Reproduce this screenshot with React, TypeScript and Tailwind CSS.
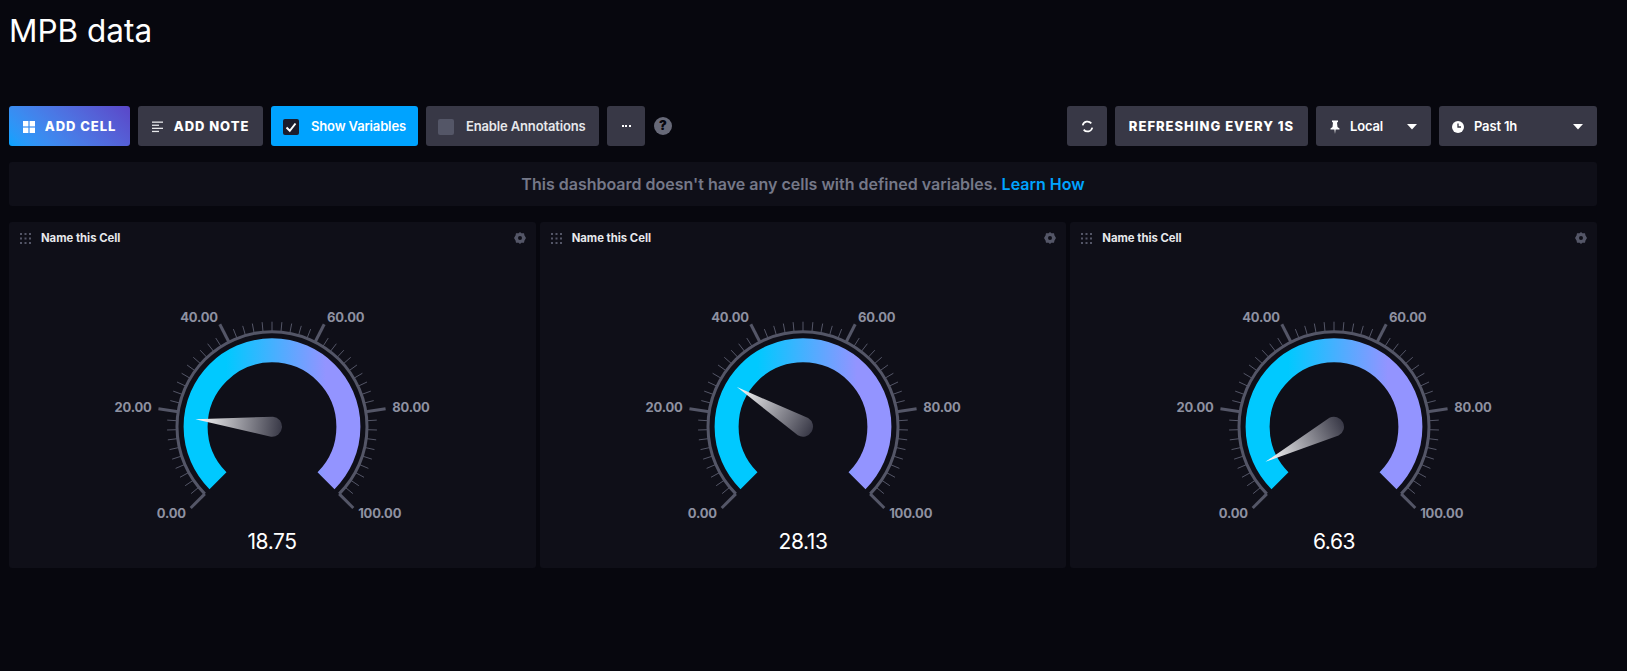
const font = "font-['Inter','Liberation_Sans',sans-serif]";

function polar(cx: number, cy: number, r: number, deg: number) {
  // 0 degrees points straight up, clockwise is positive
  const a = (deg * Math.PI) / 180;
  return { x: cx + r * Math.sin(a), y: cy - r * Math.cos(a) };
}

function arcPath(r: number, start: number, end: number) {
  const a = polar(0, 0, r, start);
  const b = polar(0, 0, r, end);
  return `M ${a.x} ${a.y} A ${r} ${r} 0 1 1 ${b.x} ${b.y}`;
}

const labels = [
  { text: "0.00", x: -100.7, y: 87.2 },
  { text: "20.00", x: -139, y: -19.5 },
  { text: "40.00", x: -73, y: -109.5 },
  { text: "60.00", x: 73.7, y: -109.5 },
  { text: "80.00", x: 139, y: -19.5 },
  { text: "100.00", x: 107.7, y: 87.2 },
];

function Gauge({ id, value }: { id: string; value: number }) {
  const ticks = Array.from({ length: 51 }, (_, i) => i);
  const needleAngle = -135 + (value / 100) * 270;

  return (
    <svg viewBox="-200 -172.7 400 310" className="h-[310px] w-[400px]">
      <defs>
        <linearGradient id={`arc-${id}`} gradientUnits="userSpaceOnUse" x1="-46" y1="0" x2="54" y2="0">
          <stop offset="0" stopColor="#00c9ff" />
          <stop offset="1" stopColor="#9394ff" />
        </linearGradient>
        <linearGradient id={`needle-${id}`} gradientUnits="userSpaceOnUse" x1="0" y1="-77" x2="0" y2="10">
          <stop offset="0" stopColor="#ffffff" />
          <stop offset="1" stopColor="#383846" />
        </linearGradient>
      </defs>
      {ticks.map((i) => {
        const deg = -135 + i * 5.4;
        const major = i % 10 === 0;
        const a = polar(0, 0, 95, deg);
        const b = polar(0, 0, major ? 115 : 105, deg);
        return (
          <line
            key={i}
            x1={a.x}
            y1={a.y}
            x2={b.x}
            y2={b.y}
            stroke="#545667"
            strokeWidth={major ? 3 : 1}
          />
        );
      })}
      <path d={arcPath(95, -135, 135)} fill="none" stroke="#545667" strokeWidth="3" />
      <path d={arcPath(76.4, -135, 135)} fill="none" stroke={`url(#arc-${id})`} strokeWidth="24" />
      <path
        d="M -10 0 L 0 -77 L 10 0 A 10 10 0 0 1 -10 0 Z"
        fill={`url(#needle-${id})`}
        transform={`rotate(${needleAngle})`}
      />
      {labels.map((l) => (
        <text
          key={l.text}
          x={l.x}
          y={l.y}
          dy="0.35em"
          textAnchor="middle"
          fill="#8e91a1"
          className="text-[13px] font-bold tracking-[-0.2px]"
        >
          {l.text}
        </text>
      ))}
      <text
        x="0"
        y="115"
        dy="0.35em"
        textAnchor="middle"
        fill="#ffffff"
        className="text-[21px] tracking-[-0.4px]"
      >
        {value.toFixed(2)}
      </text>
    </svg>
  );
}

function Grip() {
  const pts = [0, 4.5, 9];
  return (
    <svg width="11" height="11" viewBox="0 0 11 11">
      {pts.map((y) => pts.map((x) => <rect key={`${x}-${y}`} x={x} y={y} width="2" height="2" fill="#545667" />))}
    </svg>
  );
}

function Gear() {
  return (
    <svg width="12" height="12" viewBox="0 0 12 12">
      <path
        fillRule="evenodd"
        fill="#545667"
        d="M6 0 L7.4 1.2 L10 1.3 L10.5 3.4 L12 6 L10.5 8.6 L10 10.7 L7.4 10.8 L6 12 L4.6 10.8 L2 10.7 L1.5 8.6 L0 6 L1.5 3.4 L2 1.3 L4.6 1.2 Z M6 4 A2 2 0 1 0 6 8 A2 2 0 1 0 6 4 Z"
      />
    </svg>
  );
}

function Caret() {
  return (
    <svg width="10" height="6" viewBox="0 0 10 6">
      <path d="M0 0 H10 L5 5.5 Z" fill="#ffffff" />
    </svg>
  );
}

function Cell({ id, value }: { id: string; value: number }) {
  return (
    <div className="flex h-[346px] flex-col overflow-hidden rounded-[3px] bg-[#0f0f18]">
      <div className="flex h-[32px] shrink-0 items-center pr-[10px] pl-[11px]">
        <Grip />
        <span className="ml-[10px] text-[11.3px] leading-[15px] font-bold text-[#e7e8eb]">Name this Cell</span>
        <span className="ml-auto">
          <Gear />
        </span>
      </div>
      <div className="flex justify-center">
        <Gauge id={id} value={value} />
      </div>
    </div>
  );
}

export default function App() {
  return (
    <div className={`${font} min-h-[671px] bg-[#07070e] pr-[30px] pl-[9px] text-white`}>
      <h1 className="flex h-[106px] items-start pt-[12px] text-[31.5px] leading-[38px] font-normal">MPB data</h1>

      <div className="flex h-[40px] items-stretch gap-[8px]">
        <button className="flex w-[121px] items-center justify-center gap-[10px] rounded-[3px] bg-linear-45 from-[#00a3ff] to-[#5a46c8] pt-[1px] text-[13px] font-extrabold tracking-[0.95px]">
          <svg width="12" height="12" viewBox="0 0 12 12" fill="#fff">
            <rect width="5.4" height="5.4" />
            <rect x="6.6" width="5.4" height="5.4" />
            <rect y="6.6" width="5.4" height="5.4" />
            <rect x="6.6" y="6.6" width="5.4" height="5.4" />
          </svg>
          ADD CELL
        </button>
        <button className="flex w-[125px] items-center justify-center gap-[10px] rounded-[3px] bg-[#383846] pt-[1px] text-[13px] font-extrabold tracking-[0.95px]">
          <svg width="12" height="12" viewBox="0 0 12 12" fill="#e7e8eb">
            <rect y="0.5" width="11" height="1.3" />
            <rect y="3.6" width="7" height="1.3" />
            <rect y="6.7" width="11" height="1.3" />
            <rect y="9.8" width="7" height="1.3" />
          </svg>
          ADD NOTE
        </button>
        <button className="flex w-[147px] items-center gap-[12px] rounded-[3px] bg-[#00a3ff] pl-[12px] pt-[1px] text-[13px] font-semibold tracking-[-0.15px]">
          <span className="flex h-[16px] w-[16px] items-center justify-center rounded-[2px] bg-[#1c1c2c]">
            <svg width="14" height="14" viewBox="0 0 14 14" fill="none" stroke="#fff" strokeWidth="2">
              <path d="M2.5 7.5 L5.8 10.8 L11.5 3.5" />
            </svg>
          </span>
          Show Variables
        </button>
        <button className="flex w-[173px] items-center gap-[12px] rounded-[3px] bg-[#383846] pl-[12px] pt-[1px] text-[13px] font-semibold tracking-[-0.15px] text-[#e7e8eb]">
          <span className="h-[16px] w-[16px] rounded-[2px] bg-[#545667]" />
          Enable Annotations
        </button>
        <button className="flex w-[38px] items-center justify-center gap-[1.5px] rounded-[3px] bg-[#383846]">
          <span className="h-[2px] w-[2px] bg-white" />
          <span className="h-[2px] w-[2px] bg-white" />
          <span className="h-[2px] w-[2px] bg-white" />
        </button>
        <span className="ml-[1px] flex items-center">
          <span className="flex h-[18px] w-[18px] items-center justify-center rounded-full bg-[#676978] text-[13px] font-black text-[#07070e]">
            ?
          </span>
        </span>

        <button className="ml-auto flex w-[40px] items-center justify-center rounded-[3px] bg-[#383846]">
          <svg width="13" height="13" viewBox="0 0 13 13" fill="none" stroke="#fff" strokeWidth="1.7">
            <path d="M1.7 5.4 A4.9 4.9 0 0 1 10.3 3.4" />
            <path d="M11.3 7.6 A4.9 4.9 0 0 1 2.7 9.6" />
          </svg>
        </button>
        <button className="flex w-[193px] items-center justify-center rounded-[3px] bg-[#383846] pt-[1px] text-[13px] font-extrabold tracking-[1px]">
          REFRESHING EVERY 1S
        </button>
        <button className="flex w-[115px] items-center rounded-[3px] bg-[#383846] pt-[1px] pr-[14px] pl-[14px] text-[13px] font-semibold tracking-[-0.15px]">
          <svg width="10" height="14" viewBox="0 0 10 14" fill="#fff">
            <path d="M2 0.5 H8 V2 L7 2.5 L7.5 7 L9.5 8.5 V9.5 H5.6 L5 14 L4.4 9.5 H0.5 V8.5 L2.5 7 L3 2.5 L2 2 Z" />
          </svg>
          <span className="ml-[10px]">Local</span>
          <span className="ml-auto">
            <Caret />
          </span>
        </button>
        <button className="flex w-[158px] items-center rounded-[3px] bg-[#383846] pt-[1px] pr-[14px] pl-[13px] text-[13px] font-semibold tracking-[-0.15px]">
          <svg width="12" height="12" viewBox="0 0 12 12">
            <circle cx="6" cy="6" r="6" fill="#fff" />
            <path d="M6 2.5 V6 H9" fill="none" stroke="#383846" strokeWidth="1.3" />
          </svg>
          <span className="ml-[10px]">Past 1h</span>
          <span className="ml-auto">
            <Caret />
          </span>
        </button>
      </div>

      <div className="mt-[16px] flex h-[44px] items-center justify-center rounded-[3px] bg-[#0f0f18] text-[16px] font-semibold text-[#757888]">
        This dashboard doesn't have any cells with defined variables.
        <span className="ml-[4px] text-[#00a3ff]">Learn How</span>
      </div>

      <div className="mt-[16px] grid grid-cols-3 gap-[4px]">
        <Cell id="a" value={18.75} />
        <Cell id="b" value={28.13} />
        <Cell id="c" value={6.63} />
      </div>
    </div>
  );
}
